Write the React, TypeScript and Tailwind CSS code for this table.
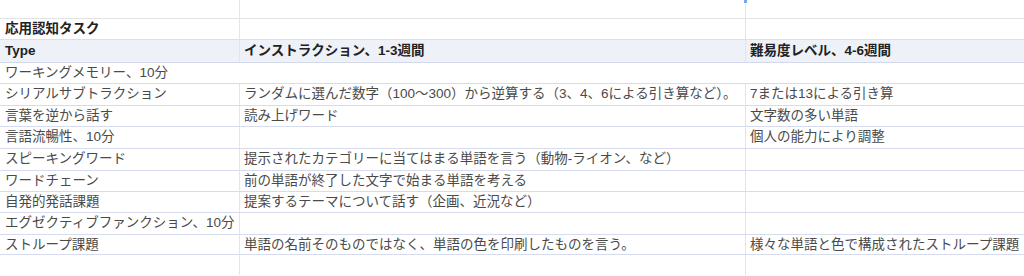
import React from "react";

type Row = {
  cells: string[];
  span?: boolean;
  bold?: boolean;
  head?: boolean;
  h: string;
  line: string;
};

const rows: Row[] = [
  { cells: ["", "", ""], h: "h-[19px]", line: "border-[#e3e3e3]" },
  { cells: ["応用認知タスク", "", ""], bold: true, h: "h-[21px]", line: "border-[#dcdfe6]" },
  {
    cells: ["Type", "インストラクション、1-3週間", "難易度レベル、4-6週間"],
    bold: true,
    head: true,
    h: "h-[23px]",
    line: "border-[#d3d9e9]",
  },
  { cells: ["ワーキングメモリー、10分"], span: true, h: "h-[21px]", line: "border-[#d6dced]" },
  {
    cells: [
      "シリアルサブトラクション",
      "ランダムに選んだ数字（100～300）から逆算する（3、4、6による引き算など）。",
      "7または13による引き算",
    ],
    h: "h-[22px]",
    line: "border-[#d6dced]",
  },
  { cells: ["言葉を逆から話す", "読み上げワード", "文字数の多い単語"], h: "h-[21px]", line: "border-[#d6dced]" },
  { cells: ["言語流暢性、10分", "", "個人の能力により調整"], h: "h-[22px]", line: "border-[#d6dced]" },
  {
    cells: ["スピーキングワード", "提示されたカテゴリーに当てはまる単語を言う（動物-ライオン、など）", ""],
    h: "h-[22px]",
    line: "border-[#d6dced]",
  },
  { cells: ["ワードチェーン", "前の単語が終了した文字で始まる単語を考える", ""], h: "h-[21px]", line: "border-[#d6dced]" },
  { cells: ["自発的発話課題", "提案するテーマについて話す（企画、近況など）", ""], h: "h-[21px]", line: "border-[#d6dced]" },
  { cells: ["エグゼクティブファンクション、10分", "", ""], h: "h-[22px]", line: "border-[#d6dced]" },
  {
    cells: [
      "ストループ課題",
      "単語の名前そのものではなく、単語の色を印刷したものを言う。",
      "様々な単語と色で構成されたストループ課題",
    ],
    h: "h-[20px]",
    line: "border-[#d6dced]",
  },
  { cells: ["", "", ""], h: "h-[21px]", line: "border-transparent" },
];

const font = { fontFamily: '"Liberation Sans", "Noto Sans CJK JP", sans-serif' };

export default function App() {
  return (
    <div className="relative w-[1024px] h-[276px] overflow-hidden bg-white text-[13.5px]" style={font}>
      <div className="absolute left-[744px] top-0 w-[3px] h-[3px] bg-[#7aa7f0]" />
      {rows.map((r, i) => (
        <div
          key={i}
          className={`grid grid-cols-[240px_506px_278px] border-b ${r.line} ${r.h} ${
            r.head ? "bg-[#eef1f7]" : "bg-white"
          }`}
        >
          {r.span ? (
            <div className="col-span-3 flex items-center pl-[5px] text-[#4a4a4a] whitespace-nowrap">
              {r.cells[0]}
            </div>
          ) : (
            r.cells.map((c, j) => (
              <div
                key={j}
                className={`flex items-center whitespace-nowrap overflow-visible ${
                  j === 0 ? "pl-[5px]" : "pl-[4px]"
                } ${j < 2 ? "border-r border-[#e2e4e9]" : ""} ${
                  r.bold ? "font-bold text-[#222]" : "text-[#4a4a4a]"
                }`}
              >
                {c}
              </div>
            ))
          )}
        </div>
      ))}
    </div>
  );
}
